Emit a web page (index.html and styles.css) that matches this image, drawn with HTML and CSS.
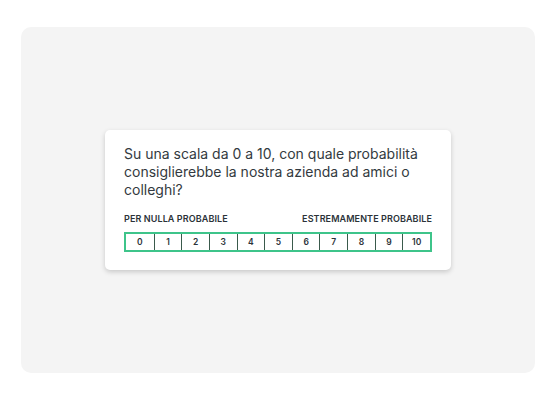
FILE: index.html
```html
<!DOCTYPE html>
<html lang="it">
<head>
<meta charset="utf-8">
<link rel="stylesheet" href="styles.css">
</head>
<body>
<div class="panel">
  <div class="card">
    <p class="question">Su una scala da 0 a 10, con quale probabilità consiglierebbe la nostra azienda ad amici o colleghi?</p>
    <div class="labels">
      <span>PER NULLA PROBABILE</span>
      <span>ESTREMAMENTE PROBABILE</span>
    </div>
    <div class="scale">
      <div class="cell">0</div>
      <div class="cell">1</div>
      <div class="cell">2</div>
      <div class="cell">3</div>
      <div class="cell">4</div>
      <div class="cell">5</div>
      <div class="cell">6</div>
      <div class="cell">7</div>
      <div class="cell">8</div>
      <div class="cell">9</div>
      <div class="cell">10</div>
    </div>
  </div>
</div>
</body>
</html>
```
FILE: styles.css
```css
html, body {
  margin: 0;
  padding: 0;
  background: #ffffff;
}
body {
  width: 557px;
  height: 400px;
  padding-top: 27px;
  box-sizing: border-box;
  font-family: Inter, Roboto, "Liberation Sans", sans-serif;
  color: #333e48;
}
.panel {
  margin-left: 21px;
  width: 514px;
  height: 346px;
  background: #f4f4f4;
  border-radius: 10px;
  display: flex;
  align-items: center;
  justify-content: center;
}
.card {
  width: 346px;
  box-sizing: border-box;
  background: #ffffff;
  border-radius: 5px;
  box-shadow: 0 2px 5px rgba(0, 0, 0, 0.18);
  padding: 15px 19px 18px 19px;
}
.question {
  margin: 0;
  font-size: 14px;
  line-height: 18px;
  color: #333a40;
}
.labels {
  display: flex;
  justify-content: space-between;
  margin-top: 14px;
  font-size: 9px;
  font-weight: 600;
  letter-spacing: 0.1px;
  line-height: 12px;
  color: #2b3238;
}
.scale {
  margin-top: 7px;
  display: grid;
  grid-template-columns: repeat(11, 1fr);
  height: 20px;
  border: 2px solid #3ec48a;
  box-sizing: border-box;
}
.cell {
  display: flex;
  align-items: center;
  justify-content: center;
  font-size: 8.5px;
  font-weight: 600;
  color: #2b3238;
  border-left: 1px solid #3a5a4c;
}
.cell:first-child {
  border-left: none;
}
```
